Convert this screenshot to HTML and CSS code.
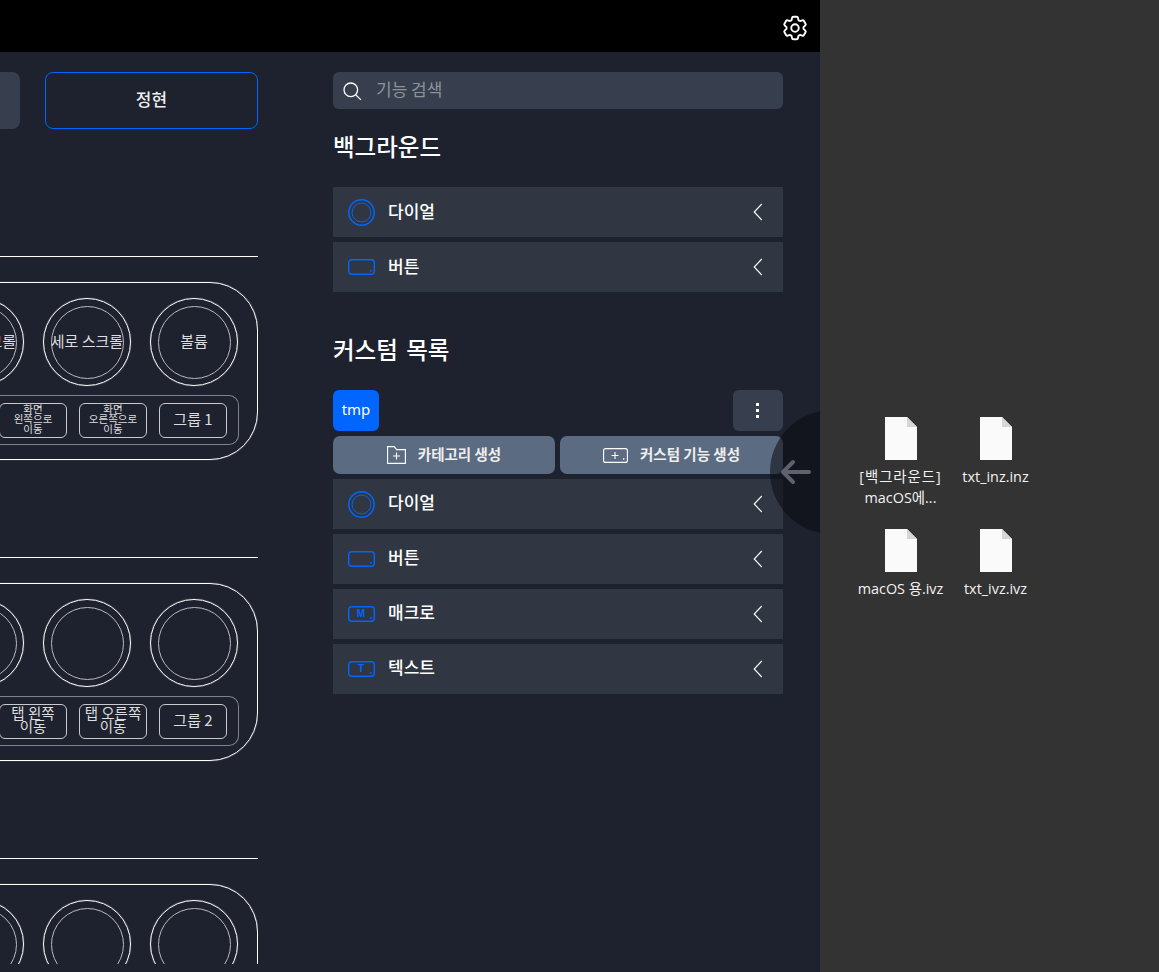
FILE: index.html
```html
<!DOCTYPE html>
<html>
<head>
    <title>Custom</title>
    <meta charset="utf-8">
    <link rel="stylesheet" href="styles.css">
</head>
<body>
    <svg class="defs" width="0" height="0">
        <symbol id="dial" viewBox="0 0 27 27">
            <circle cx="13.5" cy="13.5" r="12.7" fill="none" stroke="#0066ff" stroke-width="1.5"/>
            <circle cx="13.5" cy="13.5" r="9.4" fill="none" stroke="#0066ff" stroke-width="0.9"/>
        </symbol>
        <symbol id="chevron" viewBox="0 0 10 18">
            <path d="M8.8 1 1.2 9l7.6 8" fill="none" stroke="#fff" stroke-width="1.1"/>
        </symbol>
    </svg>

    <div class="app">
        <div class="topbar">
            <svg class="gear" width="30" height="30" viewBox="0 0 24 24" fill="none" stroke="#fff" stroke-width="1.5" stroke-linejoin="round">
                <path d="M9.594 3.94c.09-.542.56-.94 1.11-.94h2.593c.55 0 1.02.398 1.11.94l.213 1.281c.063.374.313.686.645.87.074.04.147.083.22.127.325.196.72.257 1.075.124l1.217-.456a1.125 1.125 0 0 1 1.37.49l1.296 2.247a1.125 1.125 0 0 1-.26 1.431l-1.003.827c-.293.241-.438.613-.43.992a7.723 7.723 0 0 1 0 .255c-.008.378.137.75.43.991l1.004.827c.424.35.534.955.26 1.43l-1.298 2.247a1.125 1.125 0 0 1-1.369.491l-1.217-.456c-.355-.133-.75-.072-1.076.124a6.47 6.47 0 0 1-.22.128c-.331.183-.581.495-.644.869l-.213 1.281c-.09.543-.56.94-1.11.94h-2.594c-.55 0-1.019-.398-1.11-.94l-.213-1.281c-.062-.374-.312-.686-.644-.87a6.52 6.52 0 0 1-.22-.127c-.325-.196-.72-.257-1.076-.124l-1.217.456a1.125 1.125 0 0 1-1.369-.49l-1.297-2.247a1.125 1.125 0 0 1 .26-1.431l1.004-.827c.292-.24.437-.613.43-.991a6.932 6.932 0 0 1 0-.255c.007-.38-.138-.751-.43-.992l-1.004-.827a1.125 1.125 0 0 1-.26-1.43l1.297-2.247a1.125 1.125 0 0 1 1.37-.491l1.216.456c.356.133.751.072 1.076-.124.072-.044.146-.086.22-.128.332-.183.582-.495.644-.869l.214-1.28Z"/>
                <circle cx="12" cy="12" r="3"/>
            </svg>
        </div>

        <div class="main">
            <div class="left">
                <div class="presets">
                    <div class="preset"></div>
                    <div class="preset active">정현</div>
                </div>

                <div class="section first">
                    <div class="divider"></div>
                    <div class="card">
                        <div class="dials">
                            <div class="dial"><span>가로 스크롤</span></div>
                            <div class="dial"><span>세로 스크롤</span></div>
                            <div class="dial"><span>볼륨</span></div>
                        </div>
                        <div class="group">
                            <div class="btn tiny">화면<br>왼쪽으로<br>이동</div>
                            <div class="btn tiny">화면<br>오른쪽으로<br>이동</div>
                            <div class="btn">그룹 1</div>
                        </div>
                    </div>
                </div>

                <div class="section">
                    <div class="divider"></div>
                    <div class="card">
                        <div class="dials">
                            <div class="dial"><span></span></div>
                            <div class="dial"><span></span></div>
                            <div class="dial"><span></span></div>
                        </div>
                        <div class="group">
                            <div class="btn two">탭 왼쪽<br>이동</div>
                            <div class="btn two">탭 오른쪽<br>이동</div>
                            <div class="btn">그룹 2</div>
                        </div>
                    </div>
                </div>

                <div class="section">
                    <div class="divider"></div>
                    <div class="card">
                        <div class="dials">
                            <div class="dial"><span></span></div>
                            <div class="dial"><span></span></div>
                            <div class="dial"><span></span></div>
                        </div>
                    </div>
                </div>
            </div>

            <div class="panel">
                <div class="search">
                    <svg width="20" height="20" viewBox="0 0 20 20" fill="none" stroke="#fff" stroke-width="1.3">
                        <circle cx="8.8" cy="8.8" r="6.8"/>
                        <path d="m13.7 13.7 5.2 5.2"/>
                    </svg>
                    <input type="text" placeholder="기능 검색">
                </div>

                <h2>백그라운드</h2>
                <div class="list">
                    <div class="item">
                        <svg class="ico" width="27" height="27"><use href="#dial"/></svg>
                        <span>다이얼</span>
                        <svg class="chev" width="10" height="18"><use href="#chevron"/></svg>
                    </div>
                    <div class="item">
                        <svg class="ico" width="27" height="16" viewBox="0 0 27 16" fill="none">
                            <rect x="0.7" y="0.7" width="25.6" height="14.6" rx="3" stroke="#0066ff" stroke-width="1.4"/>
                            <rect x="22" y="11" width="1.6" height="1.6" fill="#0066ff"/>
                        </svg>
                        <span>버튼</span>
                        <svg class="chev" width="10" height="18"><use href="#chevron"/></svg>
                    </div>
                </div>

                <h2 class="second">커스텀 목록</h2>
                <div class="tabs">
                    <div class="tab">tmp</div>
                    <div class="more"><i></i><i></i><i></i></div>
                </div>
                <div class="actions">
                    <div class="action">
                        <svg width="19" height="18" viewBox="0 0 19 18" fill="none" stroke="#fff" stroke-width="1.1">
                            <path d="M.6.6h6.6l2.4 3h8.8v13.8H.6z"/>
                            <path d="M9.5 6.5v7M6 10h7"/>
                        </svg>
                        <span>카테고리 생성</span>
                    </div>
                    <div class="action">
                        <svg width="25" height="15" viewBox="0 0 25 15" fill="none" stroke="#fff" stroke-width="1.1">
                            <rect x=".6" y=".6" width="23.8" height="13.8" rx="2"/>
                            <path d="M12 4v7M8.5 7.5h7"/>
                            <path d="M20 11h1.4" stroke-width="1.3"/>
                        </svg>
                        <span>커스텀 기능 생성</span>
                    </div>
                </div>
                <div class="list custom">
                    <div class="item">
                        <svg class="ico" width="27" height="27"><use href="#dial"/></svg>
                        <span>다이얼</span>
                        <svg class="chev" width="10" height="18"><use href="#chevron"/></svg>
                    </div>
                    <div class="item">
                        <svg class="ico" width="27" height="16" viewBox="0 0 27 16" fill="none">
                            <rect x="0.7" y="0.7" width="25.6" height="14.6" rx="3" stroke="#0066ff" stroke-width="1.4"/>
                            <rect x="22" y="11" width="1.6" height="1.6" fill="#0066ff"/>
                        </svg>
                        <span>버튼</span>
                        <svg class="chev" width="10" height="18"><use href="#chevron"/></svg>
                    </div>
                    <div class="item">
                        <svg class="ico" width="27" height="16" viewBox="0 0 27 16" fill="none">
                            <rect x="0.7" y="0.7" width="25.6" height="14.6" rx="3" stroke="#0066ff" stroke-width="1.4"/>
                            <rect x="22" y="11" width="1.6" height="1.6" fill="#0066ff"/>
                            <text x="13" y="11.4" class="ico-text">M</text>
                        </svg>
                        <span>매크로</span>
                        <svg class="chev" width="10" height="18"><use href="#chevron"/></svg>
                    </div>
                    <div class="item">
                        <svg class="ico" width="27" height="16" viewBox="0 0 27 16" fill="none">
                            <rect x="0.7" y="0.7" width="25.6" height="14.6" rx="3" stroke="#0066ff" stroke-width="1.4"/>
                            <rect x="22" y="11" width="1.6" height="1.6" fill="#0066ff"/>
                            <text x="13" y="11.4" class="ico-text">T</text>
                        </svg>
                        <span>텍스트</span>
                        <svg class="chev" width="10" height="18"><use href="#chevron"/></svg>
                    </div>
                </div>
            </div>
        </div>

        <div class="pull">
            <svg width="32" height="26" viewBox="0 0 32 26" fill="none" stroke="#5e626d" stroke-width="4" stroke-linecap="round" stroke-linejoin="round">
                <path d="M30 13H4M14 3 4 13l10 10"/>
            </svg>
        </div>
    </div>

    <div class="desktop">
        <div class="file">
            <div class="doc"></div>
            <div class="name"><span class="wide">[백그라운드]</span> macOS에...</div>
        </div>
        <div class="file">
            <div class="doc"></div>
            <div class="name">txt_inz.inz</div>
        </div>
        <div class="file">
            <div class="doc"></div>
            <div class="name">macOS 용.ivz</div>
        </div>
        <div class="file">
            <div class="doc"></div>
            <div class="name">txt_ivz.ivz</div>
        </div>
    </div>
</body>
</html>
```

FILE: styles.css
```css
html, body {
    height: 100%;
}
body {
    margin: 0;
    display: flex;
    overflow: hidden;
    background-color: #333;
    font-family: "Noto Sans CJK KR", "Noto Sans", sans-serif;
    color: #fff;
}
.defs {
    position: absolute;
}

/* app window */
.app {
    position: relative;
    width: 820px;
    height: 972px;
    flex-shrink: 0;
    overflow: hidden;
    background-color: #1e222e;
}
.topbar {
    height: 52px;
    background-color: #000;
    display: flex;
    justify-content: flex-end;
    align-items: center;
    padding: 3px 10px 0 0;
    box-sizing: border-box;
}
.main {
    display: flex;
    gap: 75px;
    height: 912px;
}

/* left side, runs off the window */
.left {
    width: 258px;
    height: 892px;
    margin-top: 20px;
    overflow: hidden;
    display: flex;
    flex-direction: column;
    align-items: flex-end;
    flex-shrink: 0;
}
.presets {
    display: flex;
    gap: 25px;
    justify-content: flex-end;
}
.preset {
    width: 213px;
    height: 57px;
    flex-shrink: 0;
    box-sizing: border-box;
    border-radius: 8px;
    background-color: #373f4e;
    display: flex;
    align-items: center;
    justify-content: center;
    color: #eee;
    font-size: 17px;
    font-weight: 500;
}
.preset.active {
    background-color: #1e222e;
    border: 1px solid #0066ff;
    padding-bottom: 5px;
}
.section {
    margin-top: 97px;
    width: 560px;
    flex-shrink: 0;
}
.section.first {
    margin-top: 127px;
}
.divider {
    height: 1px;
    background-color: #fff;
}
.card {
    margin-top: 25px;
    height: 178px;
    box-sizing: border-box;
    border: 1px solid #fff;
    box-shadow: 0 0 1px rgba(255, 255, 255, 0.7);
    border-radius: 48px;
    padding: 15px 19px 0 0;
}
.dials {
    display: flex;
    justify-content: flex-end;
    gap: 19px;
}
.dial {
    width: 88px;
    height: 88px;
    box-sizing: border-box;
    border: 1px solid #fff;
    box-shadow: 0 0 1px rgba(255, 255, 255, 0.7);
    border-radius: 50%;
    padding: 6.5px;
    flex-shrink: 0;
}
.dial span {
    width: 100%;
    height: 100%;
    display: flex;
    align-items: center;
    justify-content: center;
    box-sizing: border-box;
    border: 1px solid #b9bbc0;
    border-radius: 50%;
    font-size: 15px;
    color: #ddd;
    white-space: nowrap;
    padding-bottom: 3px;
}
.group {
    margin-top: 9px;
    margin-right: -1px;
    height: 50px;
    box-sizing: border-box;
    border: 1px solid #80838b;
    border-left: none;
    border-radius: 0 10px 10px 0;
    display: flex;
    justify-content: flex-end;
    align-items: center;
    gap: 12px;
    padding: 0 11px 0 0;
}
.btn {
    width: 68px;
    height: 35px;
    box-sizing: border-box;
    flex-shrink: 0;
    border: 1px solid #c9cace;
    border-radius: 6px;
    display: flex;
    align-items: center;
    justify-content: center;
    text-align: center;
    font-size: 15px;
    line-height: 14px;
    color: #ddd;
    padding-bottom: 3px;
}
.btn.tiny {
    font-size: 10.5px;
    line-height: 10px;
    padding-bottom: 2px;
}
.btn.two {
    font-size: 14.5px;
    line-height: 13px;
    padding-bottom: 4px;
}

/* right panel */
.panel {
    width: 450px;
    padding-top: 20px;
}
.search {
    height: 37px;
    display: flex;
    align-items: center;
    gap: 14px;
    background-color: #373f4e;
    border-radius: 6px;
    padding-left: 9px;
}
.search input {
    flex: 1;
    border: none;
    outline: none;
    background: none;
    padding: 0;
    height: 32px;
    margin-bottom: 5px;
    font-family: inherit;
    font-size: 17px;
    color: #fff;
}
.search input::placeholder {
    color: #8e929b;
    opacity: 1;
}
h2 {
    margin: 20px 0 23px;
    font-size: 23.5px;
    line-height: 35px;
    font-weight: 500;
    color: #fff;
}
h2.second {
    margin: 40px 0 23px;
    word-spacing: 3px;
}
.list {
    display: flex;
    flex-direction: column;
    gap: 5px;
}
.item {
    height: 50px;
    display: flex;
    align-items: center;
    background-color: #303743;
    padding-left: 15px;
    padding-right: 20px;
}
.item span {
    margin-left: 13px;
    margin-bottom: 3px;
    font-size: 17px;
    font-weight: 500;
}
.custom .item span {
    margin-bottom: 5px;
}
.item .chev {
    margin-left: auto;
}
.ico-text {
    font-family: "Liberation Sans", sans-serif;
    font-size: 10px;
    font-weight: 700;
    text-anchor: middle;
    fill: #0066ff;
}
.tabs {
    display: flex;
    justify-content: space-between;
    height: 41px;
}
.tab {
    width: 46px;
    display: flex;
    align-items: center;
    justify-content: center;
    background-color: #0066ff;
    border-radius: 6px;
    font-family: "Noto Sans", sans-serif;
    font-size: 15px;
    padding-bottom: 3px;
    box-sizing: border-box;
}
.more {
    width: 50px;
    display: flex;
    flex-direction: column;
    align-items: center;
    justify-content: center;
    gap: 3px;
    background-color: #373f4e;
    border-radius: 6px;
    padding-right: 1px;
    box-sizing: border-box;
}
.more i {
    width: 3px;
    height: 3px;
    background-color: #fff;
}
.actions {
    display: grid;
    grid-template-columns: 222px 223px;
    gap: 5px;
    margin: 5px 0;
}
.action {
    height: 38px;
    display: flex;
    align-items: center;
    justify-content: center;
    gap: 12px;
    background-color: #5b6b82;
    border-radius: 7px;
    font-size: 14.5px;
    font-weight: 700;
    color: #eee;
}
.action span {
    margin-bottom: 4px;
}

/* half circle on the window edge */
.pull {
    position: absolute;
    left: 770px;
    top: 410px;
    width: 124px;
    height: 124px;
    border-radius: 50%;
    background-color: rgba(10, 11, 16, 0.55);
    display: flex;
    align-items: center;
    padding-left: 9px;
    box-sizing: border-box;
}

/* desktop files */
.desktop {
    flex: 1;
    display: grid;
    grid-template-columns: 95px 95px;
    grid-auto-rows: 112px;
    justify-content: start;
    padding: 417px 0 0 33px;
    font-family: "Open Sans", "Noto Sans CJK KR", sans-serif;
    font-size: 14.4px;
    line-height: 21px;
}
.file {
    display: flex;
    flex-direction: column;
    align-items: center;
}
.doc {
    position: relative;
    width: 32px;
    height: 43px;
    margin-left: 1px;
    background-color: #fafafa;
    clip-path: polygon(0 0, 22px 0, 100% 10px, 100% 100%, 0 100%);
}
.doc::after {
    content: "";
    position: absolute;
    left: 22px;
    top: 0;
    width: 10px;
    height: 10px;
    background-color: #d6d6d6;
}
.name {
    margin-top: 6px;
    text-align: center;
    color: #f2f2f2;
    width: 95px;
}
.wide {
    letter-spacing: 1px;
}
```
